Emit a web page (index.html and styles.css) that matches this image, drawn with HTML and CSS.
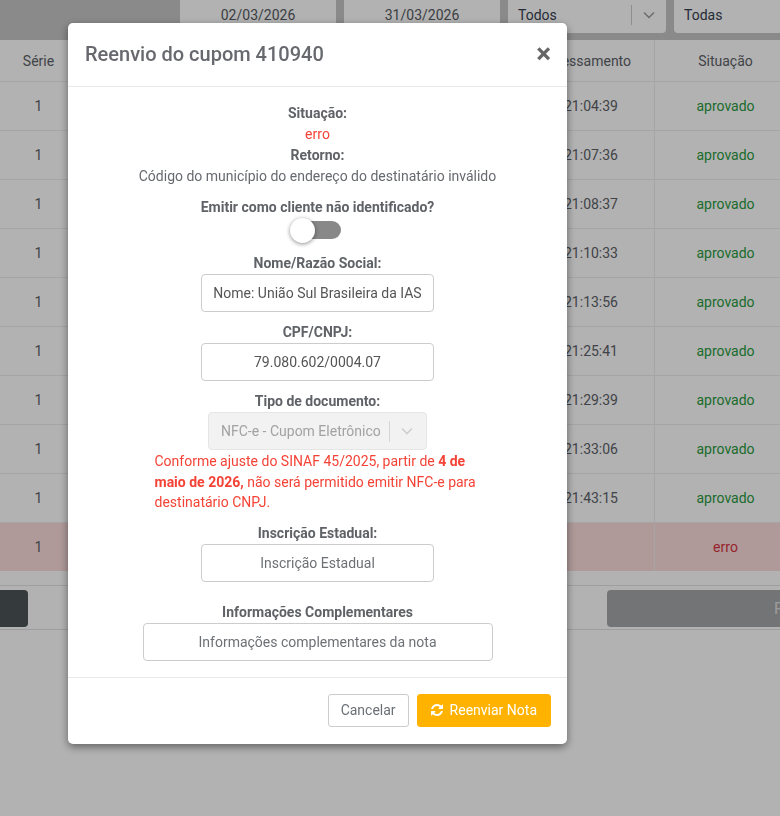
FILE: index.html
```html
<!DOCTYPE html>
<html lang="pt-BR">
<head>
<meta charset="utf-8">
<title>Reenvio do cupom</title>
<link rel="stylesheet" href="styles.css">
</head>
<body>
<div class="page">
  <div class="filters">
    <div class="fbox center">02/03/2026</div>
    <div class="fbox center">31/03/2026</div>
    <div class="fbox select">
      <span class="fval">Todos</span>
      <span class="fsep"></span>
      <svg class="fchev" width="12" height="8" viewBox="0 0 12 8"><path d="M1 1.5l5 5 5-5" fill="none" stroke="#999" stroke-width="1.4"/></svg>
    </div>
    <div class="fbox wide"><span class="fval">Todas</span></div>
  </div>

  <div class="grid">
    <div class="row head">
      <div class="cell">Série</div>
      <div class="cell"></div>
      <div class="cell"></div>
      <div class="cell"></div>
      <div class="cell proc">Processamento</div>
      <div class="cell">Situação</div>
    </div>
    <div class="row"><div class="cell">1</div><div class="cell"></div><div class="cell"></div><div class="cell"></div><div class="cell">21:04:39</div><div class="cell ok">aprovado</div></div>
    <div class="row"><div class="cell">1</div><div class="cell"></div><div class="cell"></div><div class="cell"></div><div class="cell">21:07:36</div><div class="cell ok">aprovado</div></div>
    <div class="row"><div class="cell">1</div><div class="cell"></div><div class="cell"></div><div class="cell"></div><div class="cell">21:08:37</div><div class="cell ok">aprovado</div></div>
    <div class="row"><div class="cell">1</div><div class="cell"></div><div class="cell"></div><div class="cell"></div><div class="cell">21:10:33</div><div class="cell ok">aprovado</div></div>
    <div class="row"><div class="cell">1</div><div class="cell"></div><div class="cell"></div><div class="cell"></div><div class="cell">21:13:56</div><div class="cell ok">aprovado</div></div>
    <div class="row"><div class="cell">1</div><div class="cell"></div><div class="cell"></div><div class="cell"></div><div class="cell">21:25:41</div><div class="cell ok">aprovado</div></div>
    <div class="row"><div class="cell">1</div><div class="cell"></div><div class="cell"></div><div class="cell"></div><div class="cell">21:29:39</div><div class="cell ok">aprovado</div></div>
    <div class="row"><div class="cell">1</div><div class="cell"></div><div class="cell"></div><div class="cell"></div><div class="cell">21:33:06</div><div class="cell ok">aprovado</div></div>
    <div class="row"><div class="cell">1</div><div class="cell"></div><div class="cell"></div><div class="cell"></div><div class="cell">21:43:15</div><div class="cell ok">aprovado</div></div>
    <div class="row err"><div class="cell">1</div><div class="cell"></div><div class="cell"></div><div class="cell"></div><div class="cell"></div><div class="cell bad">erro</div></div>
  </div>

  <div class="actions">
    <button class="abtn dark" aria-label="Voltar"></button>
    <button class="abtn muted">F</button>
  </div>
</div>

<div class="backdrop"></div>

<div class="modal">
  <div class="modal-header">
    <h4 class="modal-title">Reenvio do cupom 410940</h4>
    <span class="close">×</span>
  </div>
  <div class="modal-body">
    <p class="label">Situação:</p>
    <p class="status-err">erro</p>
    <p class="label">Retorno:</p>
    <p class="text">Código do município do endereço do destinatário inválido</p>
    <p class="label gap">Emitir como cliente não identificado?</p>
    <div class="switch"><span class="knob"></span></div>

    <div class="field">
      <label class="label">Nome/Razão Social:</label>
      <div class="input w233">Nome: União Sul Brasileira da IAS</div>
    </div>
    <div class="field">
      <label class="label">CPF/CNPJ:</label>
      <div class="input w233">79.080.602/0004.07</div>
    </div>
    <div class="field tight">
      <label class="label">Tipo de documento:</label>
      <div class="dselect">
        <span class="dval">NFC-e - Cupom Eletrônico</span>
        <span class="dsep"></span>
        <svg class="dchev" width="12" height="8" viewBox="0 0 12 8"><path d="M1 1.5l5 5 5-5" fill="none" stroke="#cfcfcf" stroke-width="1.6"/></svg>
      </div>
    </div>
    <p class="warn">Conforme ajuste do SINAF 45/2025, partir de <b>4 de maio de 2026,</b> não será permitido emitir NFC-e para destinatário CNPJ.</p>
    <div class="field extra">
      <label class="label">Inscrição Estadual:</label>
      <div class="input w233 ph">Inscrição Estadual</div>
    </div>
    <div class="field last">
      <label class="label">Informações Complementares</label>
      <div class="input w350 ph">Informações complementares da nota</div>
    </div>
  </div>
  <div class="modal-footer">
    <button class="btn btn-default">Cancelar</button>
    <button class="btn btn-warning">
      <svg class="ico" width="12" height="12" viewBox="0 0 1536 1536"><path fill="#fff" d="M1511 928q0 5-1 7-64 268-268 434.5T764 1536q-146 0-282.5-55T238 1324l-129 129q-19 19-45 19t-45-19-19-45V960q0-26 19-45t45-19h448q26 0 45 19t19 45-19 45l-137 137q71 66 161 102t187 36q134 0 250-65t186-179q11-17 53-117 8-23 30-23h192q13 0 22.5 9.5t9.5 22.5zm25-800v448q0 26-19 45t-45 19h-448q-26 0-45-19t-19-45 19-45l138-138Q969 256 768 256q-134 0-250 65T332 500q-11 17-53 117-8 23-30 23H50q-13 0-22.5-9.5T18 608v-7q65-268 270-434.5T768 0q146 0 284 55.5T1297 212l130-129q19-19 45-19t45 19 19 45z"/></svg>
      Reenviar Nota
    </button>
  </div>
</div>
</body>
</html>
```

FILE: styles.css
```css
* { box-sizing: border-box; }
html, body {
  margin: 0;
  padding: 0;
  overflow: hidden;
  width: 780px;
  height: 816px;
  background: #fff;
  font-family: Roboto, "Liberation Sans", Arial, sans-serif;
  font-size: 14px;
  color: #5b6066;
}

/* ---------- page behind the modal ---------- */
.page {
  width: 780px;
  margin-top: -10px;
}
.filters {
  display: flex;
  gap: 8px;
  height: 50px;
  padding: 0 0 7px 180px;
  background: #c6c6c6;
  overflow: hidden;
}
.fbox {
  flex: none;
  height: 43px;
  background: #fff;
  border-radius: 4px;
  display: flex;
  align-items: center;
  padding-top: 6px;
  color: #555a60;
  font-size: 14px;
}
.fbox.center { width: 156px; justify-content: center; }
.fbox.select { width: 158px; padding-left: 10px; color: #34404f; }
.fbox.wide { width: 160px; padding-left: 10px; color: #34404f; }
.fval { flex: 1; }
.fsep { width: 1px; height: 20px; background: #ccc; margin-right: 11px; }
.fchev { margin-right: 11px; }

.grid { width: 780px; overflow: hidden; }
.row {
  display: grid;
  grid-template-columns: 77px 150px 150px 150px 127px 142px;
  width: 796px;
  height: 49px;
  border-top: 1px solid #ededed;
}
.row.head { height: 41px; border-top: 0; }
.cell {
  display: flex;
  align-items: center;
  justify-content: center;
  border-left: 1px solid #ededed;
  color: #5c6167;
}
.cell:first-child { border-left: 0; }
.cell.proc { padding-right: 18px; }
.cell.ok { color: #2a9a40; }
.cell.bad { color: #d9333e; }
.row.err { background: #fbdcdc; }

.actions {
  display: flex;
  justify-content: space-between;
  margin-top: 14px;
  padding: 4px 0 2px;
  border-top: 1px solid #e3e3e3;
  border-bottom: 1px solid #e3e3e3;
  overflow: hidden;
}
.abtn {
  height: 37px;
  border: 0;
  border-radius: 4px;
  font-family: inherit;
  font-size: 14px;
}
.abtn.dark {
  width: 128px;
  margin-left: -100px;
  background: #4d5358;
}
.abtn.muted {
  width: 172px;
  flex: none;
  background: #a5a6a8;
  color: #e0e0e0;
  text-align: left;
  padding-left: 167px;
  font-size: 16px;
  border-radius: 4px 0 0 4px;
  overflow: hidden;
  white-space: nowrap;
}

.backdrop {
  position: fixed;
  inset: 0;
  background: rgba(0, 0, 0, 0.3);
}

/* ---------- modal ---------- */
.modal {
  position: fixed;
  left: 68px;
  top: 23px;
  width: 499px;
  background: #fff;
  border-radius: 5px;
  box-shadow: 0 3px 9px rgba(0, 0, 0, 0.45);
}
.modal-header {
  display: flex;
  align-items: center;
  justify-content: space-between;
  padding: 16px 16px 17px 17px;
  border-bottom: 1px solid #e9e9e9;
}
.modal-title {
  margin: 0;
  font-size: 20px;
  line-height: 30px;
  font-weight: 500;
  color: #67696e;
}
.close {
  font-size: 28px;
  line-height: 30px;
  font-weight: 700;
  color: #666;
}

.modal-body {
  padding: 16px 16px;
  text-align: center;
}
.modal-body p { margin: 0; }
.label {
  display: block;
  font-weight: 700;
  line-height: 21px;
  color: #5f6267;
}
.label.gap { margin-top: 10px; }
.status-err {
  line-height: 21px;
  color: #f44336;
}
.text {
  line-height: 21px;
  color: #66696e;
}

.switch {
  position: relative;
  width: 46px;
  height: 18px;
  margin: 3px auto 14px;
  border-radius: 9px;
  background: #888;
}
.knob {
  position: absolute;
  left: -5px;
  top: -3.5px;
  width: 25px;
  height: 25px;
  border-radius: 50%;
  background: #fff;
  box-shadow: 0 1px 4px rgba(0, 0, 0, 0.45);
}

.field { margin-bottom: 10px; }
.field.tight { margin-bottom: 1px; }
.field.extra { margin-top: 10px; margin-bottom: 20px; }
.field.last { margin-bottom: 0; }
.input {
  height: 38px;
  margin: 0 auto;
  border: 1px solid #ccc;
  border-radius: 4px;
  display: flex;
  align-items: center;
  justify-content: center;
  color: #555;
  font-size: 14px;
}
.input.ph { color: #6d7176; }
.w233 { width: 233px; }
.w350 { width: 350px; }

.dselect {
  width: 219px;
  height: 38px;
  margin: 0 auto;
  background: #f2f2f2;
  border: 1px solid #e5e5e5;
  border-radius: 4px;
  display: flex;
  align-items: center;
  padding-left: 12px;
  color: #a2a2a2;
}
.dval { flex: 1; text-align: left; }
.dsep { width: 1px; height: 21px; background: #d6d6d6; margin-right: 11px; }
.dchev { margin-right: 13px; }

.warn {
  width: 326px;
  margin: 0 auto !important;
  text-align: left;
  line-height: 20.5px;
  color: #f44336;
}
.warn b { font-weight: 700; }

.modal-footer {
  display: flex;
  justify-content: flex-end;
  gap: 8px;
  padding: 16px 16px 17px;
  border-top: 1px solid #e9e9e9;
}
.btn {
  height: 33px;
  padding: 0 12px;
  border-radius: 3px;
  font-family: inherit;
  font-size: 14px;
  display: flex;
  align-items: center;
  gap: 7px;
}
.btn-default {
  background: #fff;
  border: 1px solid #ccc;
  color: #6b7077;
}
.btn-warning {
  background: #ffb300;
  border: 1px solid #ffb300;
  color: #fff;
  padding-left: 13px;
  padding-right: 13px;
}
.ico { flex: none; }
```
